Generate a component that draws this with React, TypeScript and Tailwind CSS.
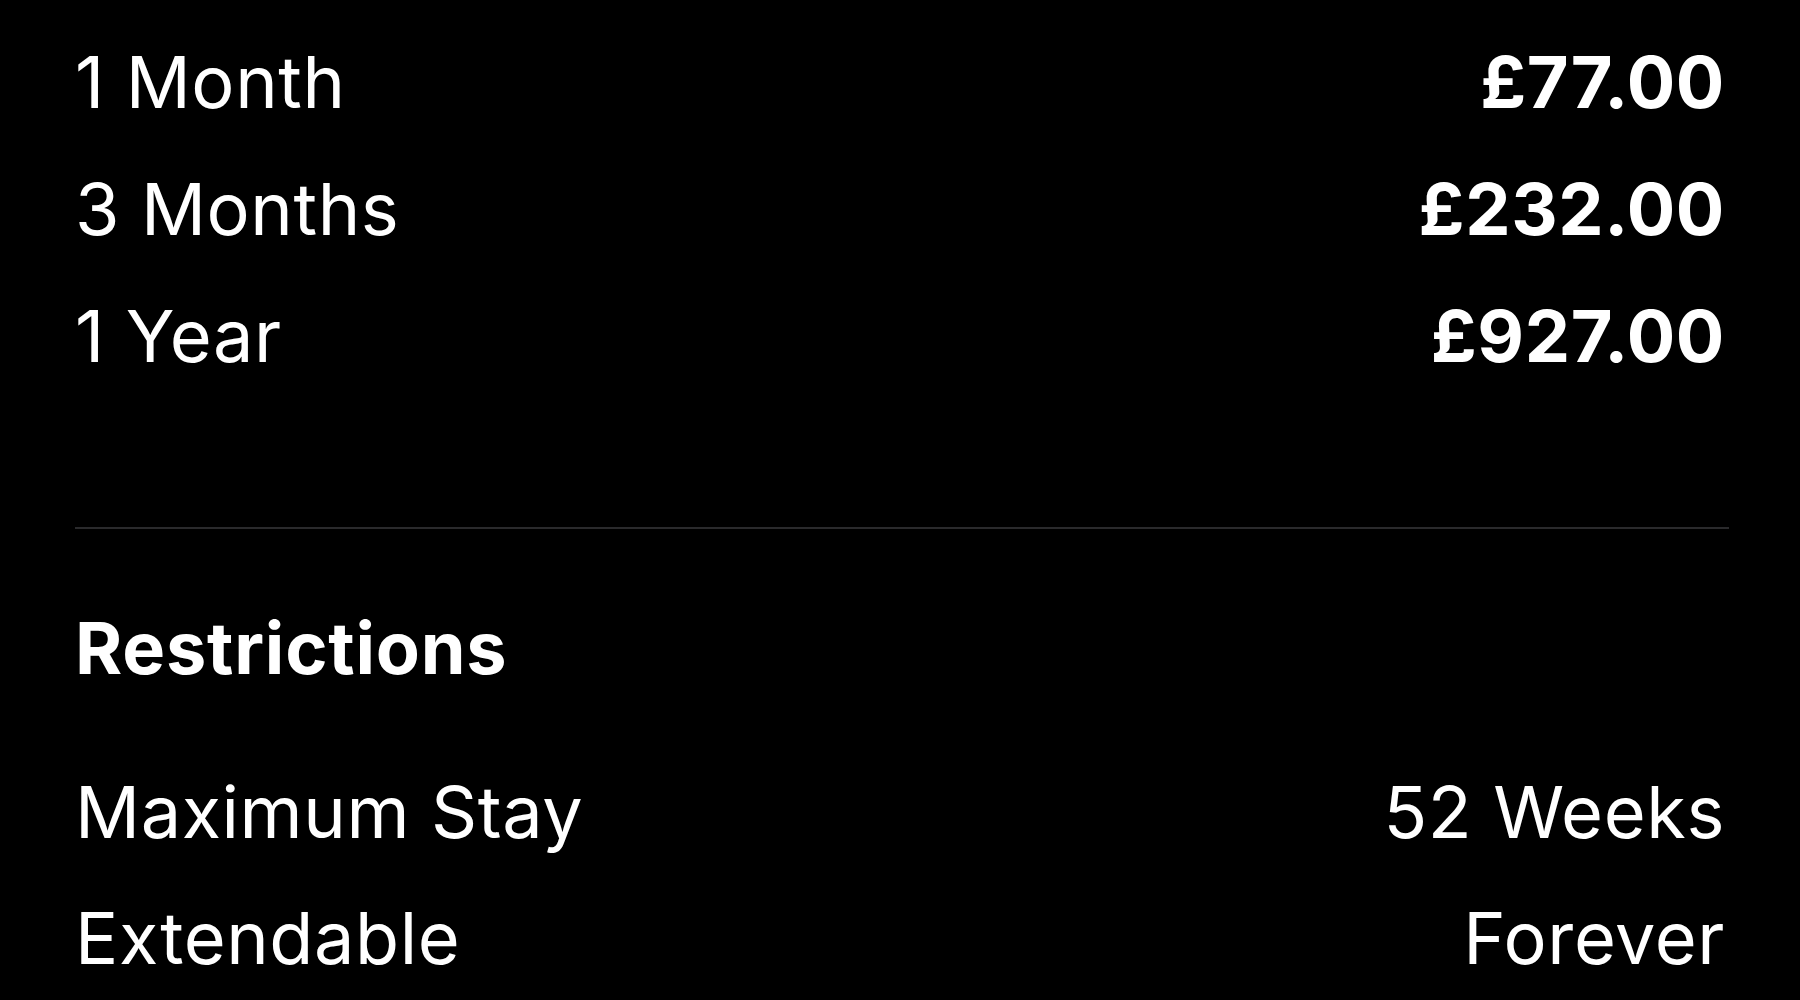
const prices = [
  { label: "1 Month", value: "£77.00" },
  { label: "3 Months", value: "£232.00" },
  { label: "1 Year", value: "£927.00" },
];

const restrictions = [
  { label: "Maximum Stay", value: "52 Weeks" },
  { label: "Extendable", value: "Forever" },
];

export default function App() {
  return (
    <div
      className="w-full min-h-screen h-[1000px] overflow-hidden bg-black text-white pl-[75px] pr-[75px] pt-[18px]"
      style={{ fontFamily: "Inter, 'Noto Sans', sans-serif" }}
    >
      <div className="flex flex-col">
        {prices.map((item) => (
          <div
            key={item.label}
            className="flex items-center justify-between h-[127px] leading-[127px] text-[72px] tracking-[0.6px]"
          >
            <span className="font-normal">{item.label}</span>
            <span className="font-bold">{item.value}</span>
          </div>
        ))}
      </div>

      <div className="mt-[128px] -mr-[4px] h-[2px] bg-[#2a2a2c]" />

      <h2 className="mt-[55px] h-[127px] leading-[127px] text-[72px] font-bold tracking-[0.8px]">
        Restrictions
      </h2>

      <div className="mt-[38px] flex flex-col">
        {restrictions.map((item) => (
          <div
            key={item.label}
            className="flex items-center justify-between h-[126px] leading-[126px] text-[72px] tracking-[0.6px]"
          >
            <span>{item.label}</span>
            <span>{item.value}</span>
          </div>
        ))}
      </div>
    </div>
  );
}
